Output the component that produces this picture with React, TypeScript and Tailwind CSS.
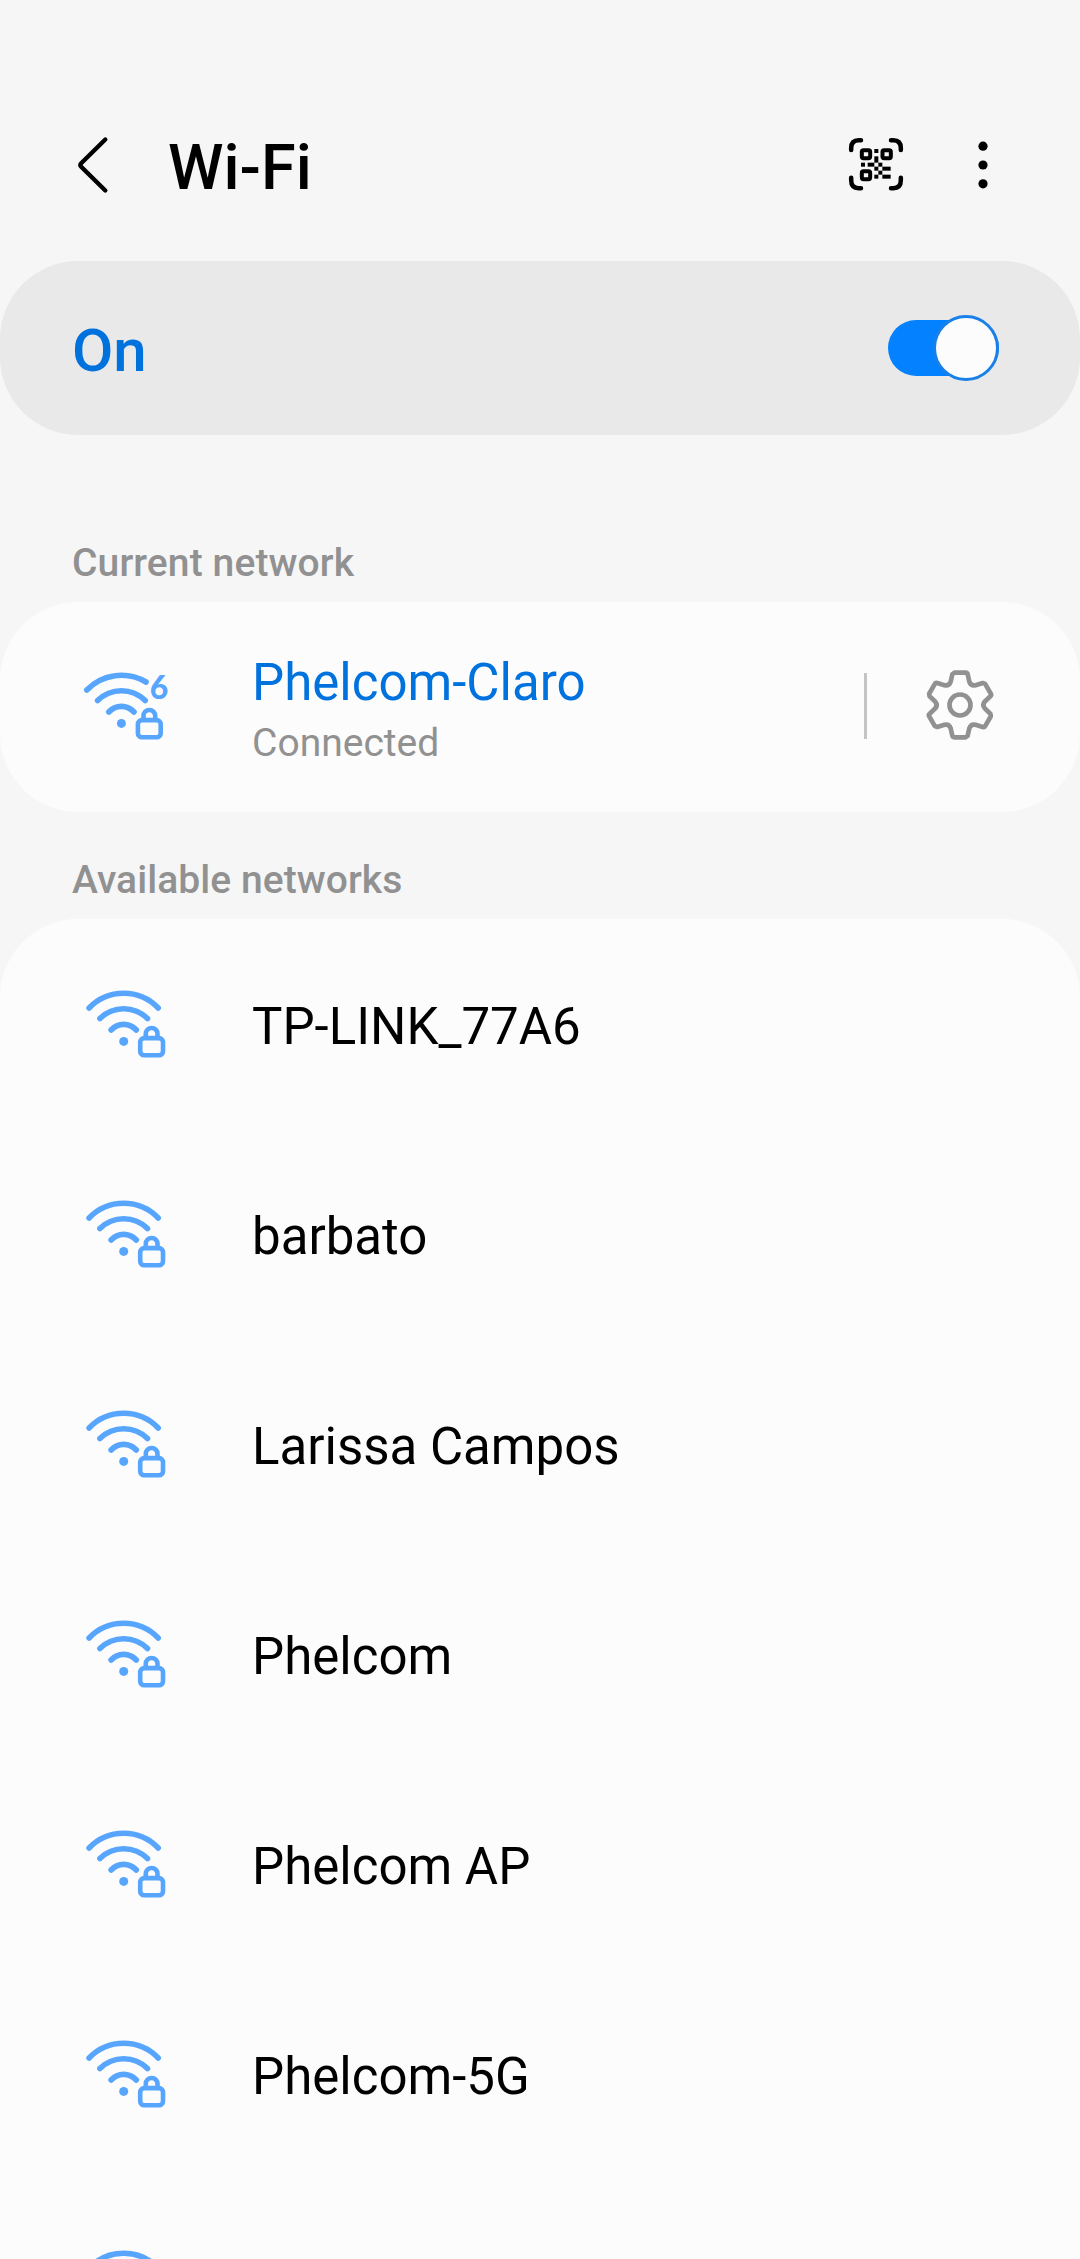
import React, { useState } from 'react';

interface Network {
    id: number;
    name: string;
}

const networks: Network[] = [
    { id: 1, name: 'TP-LINK_77A6' },
    { id: 2, name: 'barbato' },
    { id: 3, name: 'Larissa Campos' },
    { id: 4, name: 'Phelcom' },
    { id: 5, name: 'Phelcom AP' },
    { id: 6, name: 'Phelcom-5G' },
    { id: 7, name: '' },
];

const BackIcon = () => (
    <svg className="w-[34px] h-[60px]" viewBox="0 0 34 60" fill="none" stroke="currentColor" strokeWidth="4.4" strokeLinecap="round" strokeLinejoin="round">
        <path d="M29.3 4.5 L5.2 28.2 Q3.4 30 5.2 31.8 L29.3 55.5" />
    </svg>
);

const QrScanIcon = () => (
    <svg className="w-[60px] h-[60px]" viewBox="0 0 180 180" fill="none" stroke="currentColor">
        <g strokeWidth="13.5" strokeLinecap="round">
            <path d="M45 18.5 H38 Q15.5 18.5 15.5 42 V48" />
            <path d="M135 18.5 H142 Q164.5 18.5 164.5 42 V48" />
            <path d="M15.5 131 V139 Q15.5 162.5 38 162.5 H45" />
            <path d="M164.5 131 V139 Q164.5 162.5 142 162.5 H135" />
        </g>
        <g strokeWidth="12">
            <rect x="47.5" y="48.5" width="25" height="24" rx="5" />
            <rect x="109.5" y="48.5" width="25" height="24" rx="5" />
            <rect x="47.5" y="111.5" width="25" height="24" rx="5" />
        </g>
        <g fill="currentColor" stroke="none">
            <rect x="85" y="45" width="12" height="12" />
            <rect x="85" y="67" width="12" height="19" />
            <rect x="45" y="86" width="12" height="12" />
            <rect x="65" y="86" width="20" height="12" />
            <rect x="97" y="86" width="12" height="12" />
            <rect x="85" y="98" width="12" height="12" />
            <rect x="109" y="98" width="25" height="12" />
            <rect x="97" y="110" width="12" height="12" />
            <rect x="85" y="122" width="12" height="12" />
            <rect x="109" y="122" width="25" height="12" />
        </g>
    </svg>
);

const MoreIcon = () => (
    <svg className="w-[12px] h-[50px]" viewBox="0 0 12 50" fill="currentColor">
        <circle cx="6" cy="6.2" r="4.6" />
        <circle cx="6" cy="25" r="4.6" />
        <circle cx="6" cy="43.8" r="4.6" />
    </svg>
);

// Secured network; the Wi-Fi 6 version has a shorter outer arc to leave room for the number
const WifiIcon: React.FC<{ wifi6?: boolean }> = ({ wifi6 }) => (
    <svg className="w-[130px] h-[110px] shrink-0 text-[#57a5fd]" viewBox="0 0 130 110" fill="none" stroke="currentColor">
        <g transform={wifi6 ? 'translate(-2.3 0)' : 'translate(0 1)'}>
            <g strokeWidth="5.6" strokeLinecap="round">
                <path d={wifi6 ? 'M29.1 38 A48 48 0 0 1 88.3 30' : 'M29.1 38 A48 48 0 0 1 98.2 38'} />
                <path d="M39.9 48.5 A33.8 33.8 0 0 1 87.5 48.5" />
                <path d="M51.1 60 A17 17 0 0 1 76.3 60" />
            </g>
            <circle cx="63.7" cy="71.4" r="4.5" fill="currentColor" stroke="none" />
            <g strokeWidth="4.6">
                <rect x="80.2" y="68.1" width="22.8" height="17.1" rx="4" />
                <path d="M85.8 68 V63.8 A5.85 5.85 0 0 1 97.5 63.8 V68" />
            </g>
        </g>
        {wifi6 && (
            <text x="89.8" y="47.2" className="font-['Lato',sans-serif] text-[32px] font-black" fill="currentColor" stroke="none">6</text>
        )}
    </svg>
);

// Six teeth, each one turned by 60 degrees about the centre
const rotatePoint = (x: number, y: number, turn: number) => {
    const a = (turn * Math.PI) / 3;
    const rx = x * Math.cos(a) - y * Math.sin(a);
    const ry = x * Math.sin(a) + y * Math.cos(a);
    return `${rx.toFixed(2)} ${ry.toFixed(2)}`;
};

const gearPath = [0, 1, 2, 3, 4, 5]
    .map(i => {
        const p = (x: number, y: number) => rotatePoint(x, y, i);
        return `${i === 0 ? 'M' : 'L'}${p(-17, -97)} L${p(17, -97)} Q${p(22, -97)} ${p(23, -92)} L${p(28, -70)} Q${p(32.5, -56.5)} ${p(46.6, -59.2)} L${p(68.2, -65.9)}`;
    })
    .join(' ') + ' Z';

const GearIcon = () => (
    <svg className="w-[72px] h-[72px] text-[#919191]" viewBox="-108 -108 216 216" fill="none" stroke="currentColor" strokeWidth="14" strokeLinejoin="round">
        <path d={gearPath} />
        <circle r="31.5" />
    </svg>
);

const App: React.FC = () => {
    const [enabled, setEnabled] = useState(true);

    return (
        <div className="w-[1080px] h-[2259px] overflow-hidden bg-[#f6f6f6] font-['Roboto',sans-serif] text-black flex flex-col">
            <header className="h-[261px] shrink-0 pt-[135px] pl-[76px] pr-[91px] flex items-start">
                <button aria-label="Back"><BackIcon /></button>
                <h1 className="ml-[58px] mt-[-1px] text-[63px] leading-[68px] font-medium">Wi-Fi</h1>
                <div className="ml-auto flex items-center">
                    <button aria-label="Scan QR code" className="mr-[71px] -mt-px"><QrScanIcon /></button>
                    <button aria-label="More options" className="mt-px"><MoreIcon /></button>
                </div>
            </header>

            <section className="h-[174px] shrink-0 rounded-[78px] bg-[#e9e9e9] pl-[72px] pr-[81px] flex items-center justify-between">
                <span className="mt-1.5 text-[60px] leading-none font-medium text-[#0072de]">On</span>
                <button
                    role="switch"
                    aria-checked={enabled}
                    aria-label="Wi-Fi"
                    onClick={() => setEnabled(!enabled)}
                    className="w-[111px] h-14 rounded-full bg-[#0381fe] flex items-center justify-end"
                >
                    <span className="size-[66px] shrink-0 rounded-full border-[3px] border-[#1a80e9] bg-[#fcfcfc]" />
                </button>
            </section>

            <h2 className="h-[167px] shrink-0 pt-[105px] pl-[72px] text-[39px] leading-[46px] tracking-[0.12px] font-medium text-[#919191]">Current network</h2>
            <section className="h-[210px] shrink-0 rounded-[78px] bg-[#fcfcfc] pl-[60px] pr-[84px] flex items-center">
                <WifiIcon wifi6 />
                <div className="ml-[62px] mt-3">
                    <p className="text-[51px] leading-[60px] text-[#0072de]">Phelcom-Claro</p>
                    <p className="text-[39px] leading-[60px] text-[#919191]">Connected</p>
                </div>
                <div className="ml-auto -mt-0.5 w-[3px] h-[66px] bg-[#c4c4c4]" />
                <button aria-label="Network settings" className="ml-[57px] -mt-1"><GearIcon /></button>
            </section>

            <h2 className="h-[107px] shrink-0 pt-[45px] pl-[72px] text-[39px] leading-[46px] tracking-[0.06px] font-medium text-[#919191]">Available networks</h2>
            <ul className="flex-1 rounded-t-[78px] bg-[#fcfcfc]">
                {networks.map(network => (
                    <li key={network.id} className="h-[210px] pl-[60px] flex items-center">
                        <WifiIcon />
                        <span className="ml-[62px] mt-[5px] text-[51px] leading-[60px]">{network.name}</span>
                    </li>
                ))}
            </ul>
        </div>
    );
};

export default App;
